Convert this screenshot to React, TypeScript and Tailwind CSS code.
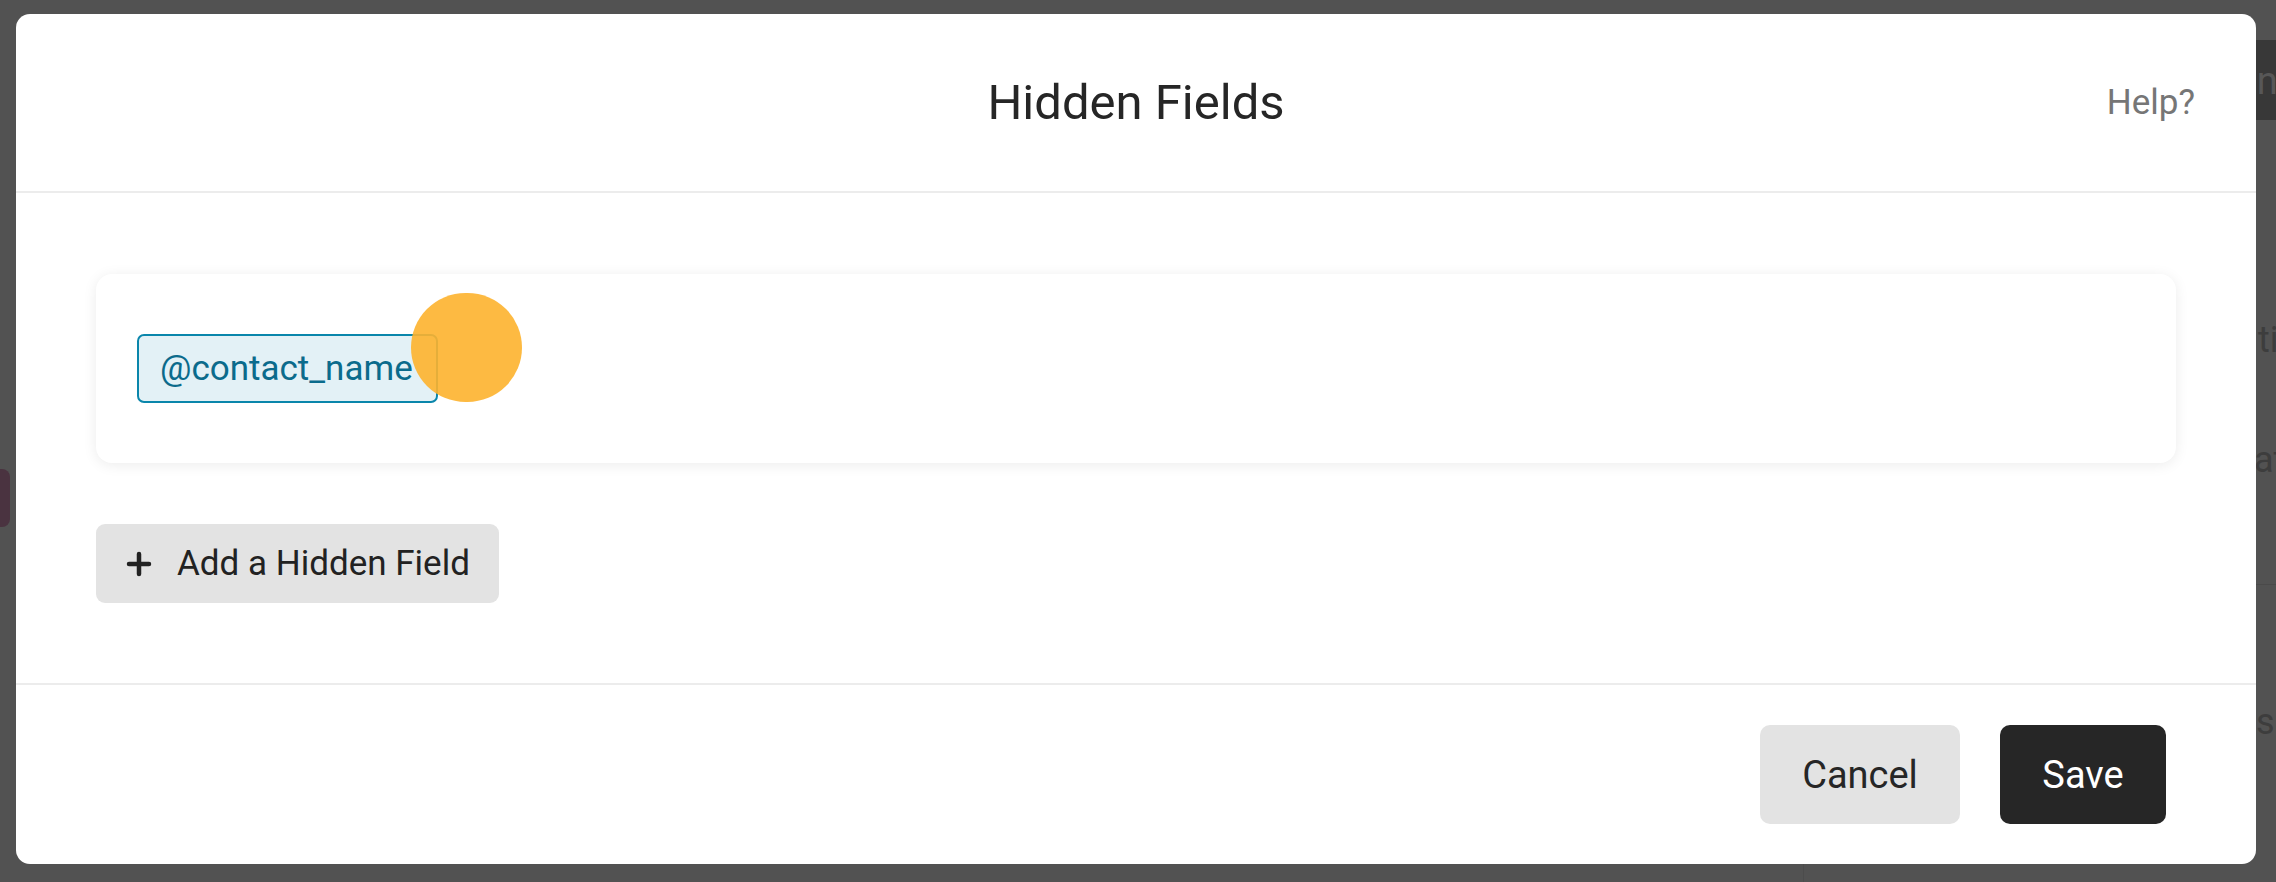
import React from "react";

function PlusIcon() {
  return (
    <svg width="26" height="26" viewBox="0 0 26 26" fill="none">
      <path d="M13 3v20M3 13h20" stroke="#222222" strokeWidth="4.5" strokeLinecap="round" />
    </svg>
  );
}

export default function App() {
  return (
    <div
      className="relative w-[2276px] h-[882px] overflow-hidden bg-[#525252]"
      style={{ fontFamily: "Roboto, 'Liberation Sans', sans-serif" }}
    >
      {/* dimmed page behind the overlay */}
      <div className="absolute right-0 top-[40px] w-[40px] h-[80px] bg-[#383838]" />
      <div className="absolute left-[2236px] top-[62px] text-[38px] text-[#575757] leading-none">an</div>
      <div className="absolute left-[2258px] top-[322px] text-[36px] text-[#3d3d3d] leading-none">tio</div>
      <div className="absolute left-[2254px] top-[442px] text-[36px] text-[#3d3d3d] leading-none">at</div>
      <div className="absolute left-[2256px] top-[584px] w-[20px] h-px bg-[#4a4a4a]" />
      <div className="absolute left-[2256px] top-[704px] text-[36px] text-[#3d3d3d] leading-none">s</div>
      <div className="absolute left-[-10px] top-[469px] w-[20px] h-[58px] rounded-[8px] bg-[#4a3340]" />
      <div className="absolute left-[1803px] top-[864px] w-px h-[18px] bg-[#4c4c4c]" />

      {/* modal */}
      <div className="relative pt-[14px] pl-[16px] pr-[20px] pb-[18px]">
        <div className="w-[2240px] h-[850px] bg-white rounded-[14px] flex flex-col">
          {/* header */}
          <div className="relative h-[179px] flex items-center justify-center border-b-2 border-[#ececec]">
            <h1 className="text-[49px] text-[#262626] font-normal leading-none">Hidden Fields</h1>
            <span className="absolute right-[61px] text-[35px] text-[#767676] leading-none">Help?</span>
          </div>

          {/* body */}
          <div className="flex flex-col items-start px-[80px] pt-[81px] pb-[80px] border-b-2 border-[#ececec]">
            <div className="w-full h-[189px] bg-white rounded-[16px] shadow-[0_2px_14px_rgba(0,0,0,0.08)] px-[41px] flex items-center">
              <div className="relative">
                <div className="h-[69px] w-[301px] flex items-center pl-[21px] rounded-[7px] border-2 border-[#0a86ab] bg-[#e3f1f6] text-[35px] text-[#0b6b8c] leading-none">
                  @contact_name
                </div>
                <div className="absolute left-[274px] top-[-41px] w-[111px] h-[109px] rounded-full bg-[#fdb22e]/[0.9]" />
              </div>
            </div>

            <button className="mt-[61px] h-[79px] w-[403px] rounded-[9px] bg-[#e3e3e3] flex items-center pl-[30px] gap-[25px]">
              <PlusIcon />
              <span className="text-[35px] text-[#222222] leading-none">Add a Hidden Field</span>
            </button>
          </div>

          {/* footer */}
          <div className="flex-1 flex items-center justify-end gap-[40px] pr-[90px]">
            <button className="h-[99px] w-[200px] rounded-[10px] bg-[#e3e3e3] text-[38px] text-[#262626] leading-none">
              Cancel
            </button>
            <button className="h-[99px] w-[166px] rounded-[10px] bg-[#262626] text-[38px] text-white leading-none">
              Save
            </button>
          </div>
        </div>
      </div>
    </div>
  );
}
